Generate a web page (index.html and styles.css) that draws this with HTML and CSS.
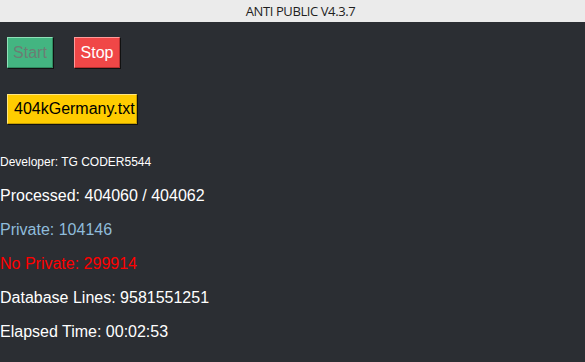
FILE: index.html
```html
<!DOCTYPE html>
<html lang="en">
<head>
  <meta charset="UTF-8" />
  <title>ANTI PUBLIC V4.3.7</title>
  <link rel="stylesheet" href="styles.css">
</head>
<body>
  <div class="titlebar">ANTI PUBLIC V4.3.7</div>

  <div class="app">
    <div class="controls">
      <button class="btn start" disabled>Start</button>
      <button class="btn stop">Stop</button>
    </div>

    <button class="btn file">404kGermany.txt</button>

    <div class="stats">
      <div class="line dev">Developer: TG CODER5544</div>
      <div class="line">Processed: 404060 / 404062</div>
      <div class="line private">Private: 104146</div>
      <div class="line noprivate">No Private: 299914</div>
      <div class="line">Database Lines: 9581551251</div>
      <div class="line">Elapsed Time: 00:02:53</div>
    </div>
  </div>
</body>
</html>
```

FILE: styles.css
```css
html, body {
  margin: 0;
  height: 100%;
}
body {
  background: #2b2e33;
  font-family: "Liberation Sans", Arial, sans-serif;
  overflow: hidden;
}
.titlebar {
  height: 22px;
  line-height: 22px;
  background: #ebebeb;
  color: #1e1e1e;
  font-family: "Open Sans", "Noto Sans", sans-serif;
  font-size: 13px;
  text-align: center;
  padding-left: 16px;
  letter-spacing: -0.4px;
}
.app {
  padding: 15px 0 0 0;
}
.controls {
  display: flex;
  gap: 21px;
  padding-left: 7px;
}
.btn {
  font-family: "Liberation Sans", Arial, sans-serif;
  font-size: 16px;
  height: 31px;
  padding: 0;
  border: 1px solid;
  box-shadow: 1px 1px 0 #111;
  cursor: pointer;
}
.start {
  width: 46px;
  background: #43b581;
  color: #6c7d74;
  border-color: #8fe0b8 #2f8a60 #2f8a60 #8fe0b8;
}
.stop {
  width: 46px;
  background: #f04747;
  color: #fff;
  border-color: #ff9a9a #b83030 #b83030 #ff9a9a;
}
.file {
  display: block;
  margin: 26px 0 0 7px;
  width: 130px;
  height: 30px;
  background: #ffcc00;
  color: #000;
  border-color: #ffe680 #c79f00 #c79f00 #ffe680;
  text-align: left;
  padding-left: 6px;
}
.stats {
  margin-top: 21px;
}
.line {
  height: 34px;
  line-height: 34px;
  font-size: 16px;
  color: #fff;
}
.dev {
  font-size: 12px;
}
.private {
  color: #8fbcdb;
}
.noprivate {
  color: #ff0000;
}
```
